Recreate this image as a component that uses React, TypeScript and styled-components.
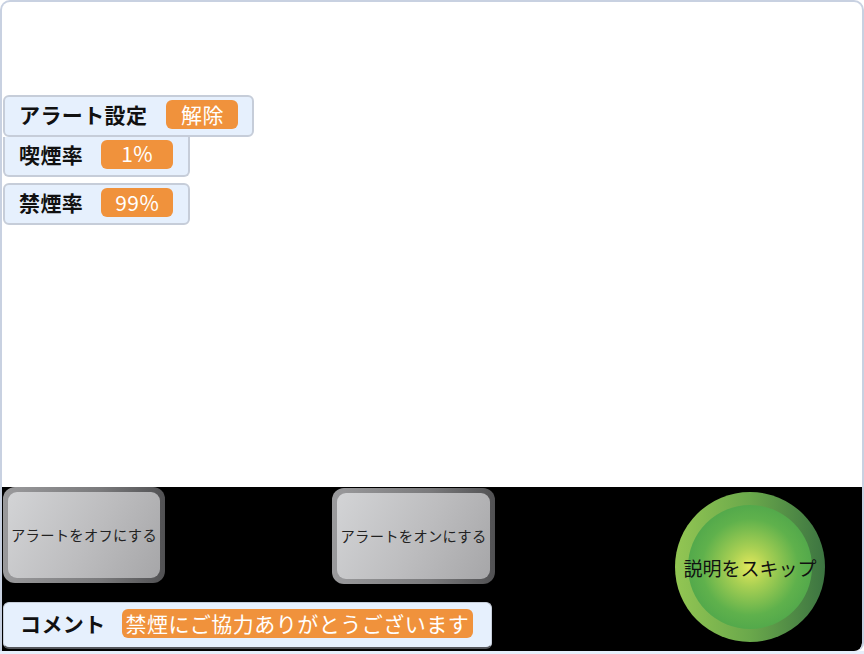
import React from 'react'
import styled, {createGlobalStyle} from 'styled-components'

const GlobalStyle = createGlobalStyle`
  html, body {
    margin: 0;
    padding: 0;
    background: #fff;
  }
  body {
    font-family: 'Noto Sans CJK JP', 'Noto Sans', sans-serif;
  }
`

const Frame = styled.div`
  width: 864px;
  height: 651px;
  box-sizing: border-box;
  border: 2px solid #c8d1e1;
  border-bottom: none;
  border-radius: 10px 10px 8px 0;
  overflow: hidden;
  display: flex;
  flex-direction: column;
  background: #fff;
`

const BottomStrip = styled.div`
  height: 3px;
  background: #e6effb;
`

const Stage = styled.div`
  height: 485px;
  padding: 93px 0 0 1px;
  box-sizing: border-box;
  display: flex;
  flex-direction: column;
  align-items: flex-start;
`

const InfoRow = styled.div<{$width: number; $gap: number; $flatTop?: boolean; $mt?: number}>`
  width: ${p => p.$width}px;
  height: ${p => (p.$flatTop ? 40 : 42)}px;
  margin-top: ${p => p.$mt ?? 0}px;
  box-sizing: border-box;
  background: #e6f0fd;
  border: 2px solid #c6cdd9;
  border-top: ${p => (p.$flatTop ? 'none' : '2px solid #c6cdd9')};
  border-radius: ${p => (p.$flatTop ? '0 0 6px 6px' : '6px')};
  display: flex;
  align-items: center;
  gap: ${p => p.$gap}px;
  padding: ${p => (p.$flatTop ? '0 0 4px 14px' : '0 0 3px 14px')};
`

const Label = styled.span`
  font-size: 21px;
  line-height: 1;
  font-weight: 700;
  color: #111;
  letter-spacing: 0.4px;
  white-space: nowrap;
`

const Badge = styled.span<{$width?: number}>`
  display: inline-flex;
  align-items: center;
  justify-content: center;
  width: ${p => (p.$width ? `${p.$width}px` : 'auto')};
  height: 29px;
  padding: 0 4px 1px;
  box-sizing: border-box;
  background: #f0923c;
  color: #fff;
  border-radius: 6px;
  font-size: 21px;
  line-height: 1;
  letter-spacing: 0.5px;
  white-space: nowrap;
`

const Panel = styled.div`
  flex: 1;
  background: #000;
  display: grid;
  grid-template-columns: 162px 167px 163px 180px 150px;
  grid-template-rows: 97px 1fr;
  padding: 0 0 0 1px;
  border-bottom-right-radius: 8px;
`

const GrayButton = styled.button<{$col: number; $mt?: number}>`
  grid-column: ${p => p.$col};
  grid-row: 1;
  margin-top: ${p => p.$mt ?? 0}px;
  height: 96px;
  padding: 5px;
  border: none;
  border-radius: 12px;
  background: linear-gradient(90deg, #9a9a9c 0%, #7a7a7c 60%, #515153 100%);
  cursor: pointer;
`

const GrayFace = styled.span`
  display: flex;
  align-items: center;
  justify-content: center;
  height: 100%;
  border-radius: 9px;
  background: linear-gradient(120deg, #d3d4d6 0%, #bcbcbe 55%, #a6a6a8 100%);
  font-family: 'Noto Sans CJK JP', sans-serif;
  font-size: 14.3px;
  line-height: 1;
  letter-spacing: 0.3px;
  color: #222;
  white-space: nowrap;
`

const SkipButton = styled.button`
  grid-column: 5;
  grid-row: 1 / span 2;
  align-self: start;
  margin-top: 5px;
  width: 150px;
  height: 150px;
  padding: 13px;
  border: none;
  border-radius: 50%;
  background: linear-gradient(90deg, #93c653 0%, #6aa84b 50%, #3c7441 100%);
  cursor: pointer;
`

const SkipFace = styled.span`
  display: flex;
  align-items: center;
  justify-content: center;
  width: 100%;
  height: 100%;
  border-radius: 50%;
  background: radial-gradient(circle at 50% 50%, #e2e85c 0%, #a9d053 22%, #5fb14c 55%, #3d9a49 100%);
  font-family: 'Noto Sans CJK JP', sans-serif;
  font-size: 19px;
  line-height: 1;
  color: #111;
  white-space: nowrap;
`

const CommentRow = styled.div`
  grid-column: 1 / span 3;
  grid-row: 2;
  align-self: start;
  margin-top: 18px;
  width: 489px;
  height: 47px;
  box-sizing: border-box;
  background: #e6f0fd;
  border: 1px solid #c6cdd9;
  border-bottom: 2px solid #55575c;
  border-radius: 6px;
  display: flex;
  align-items: center;
  gap: 16px;
  padding: 0 0 3px 16px;
`

export default function App() {
  return (
    <>
      <GlobalStyle />
      <Frame>
        <Stage>
          <InfoRow $width={251} $gap={19}>
            <Label>アラート設定</Label>
            <Badge $width={72}>解除</Badge>
          </InfoRow>
          <InfoRow $width={187} $gap={18} $flatTop>
            <Label>喫煙率</Label>
            <Badge $width={72}>1%</Badge>
          </InfoRow>
          <InfoRow $width={187} $gap={18} $mt={6}>
            <Label>禁煙率</Label>
            <Badge $width={72}>99%</Badge>
          </InfoRow>
        </Stage>
        <Panel>
          <GrayButton $col={1}>
            <GrayFace>アラートをオフにする</GrayFace>
          </GrayButton>
          <GrayButton $col={3} $mt={1}>
            <GrayFace>アラートをオンにする</GrayFace>
          </GrayButton>
          <SkipButton>
            <SkipFace>説明をスキップ</SkipFace>
          </SkipButton>
          <CommentRow>
            <Label>コメント</Label>
            <Badge>禁煙にご協力ありがとうございます</Badge>
          </CommentRow>
        </Panel>
      </Frame>
      <BottomStrip />
    </>
  )
}
